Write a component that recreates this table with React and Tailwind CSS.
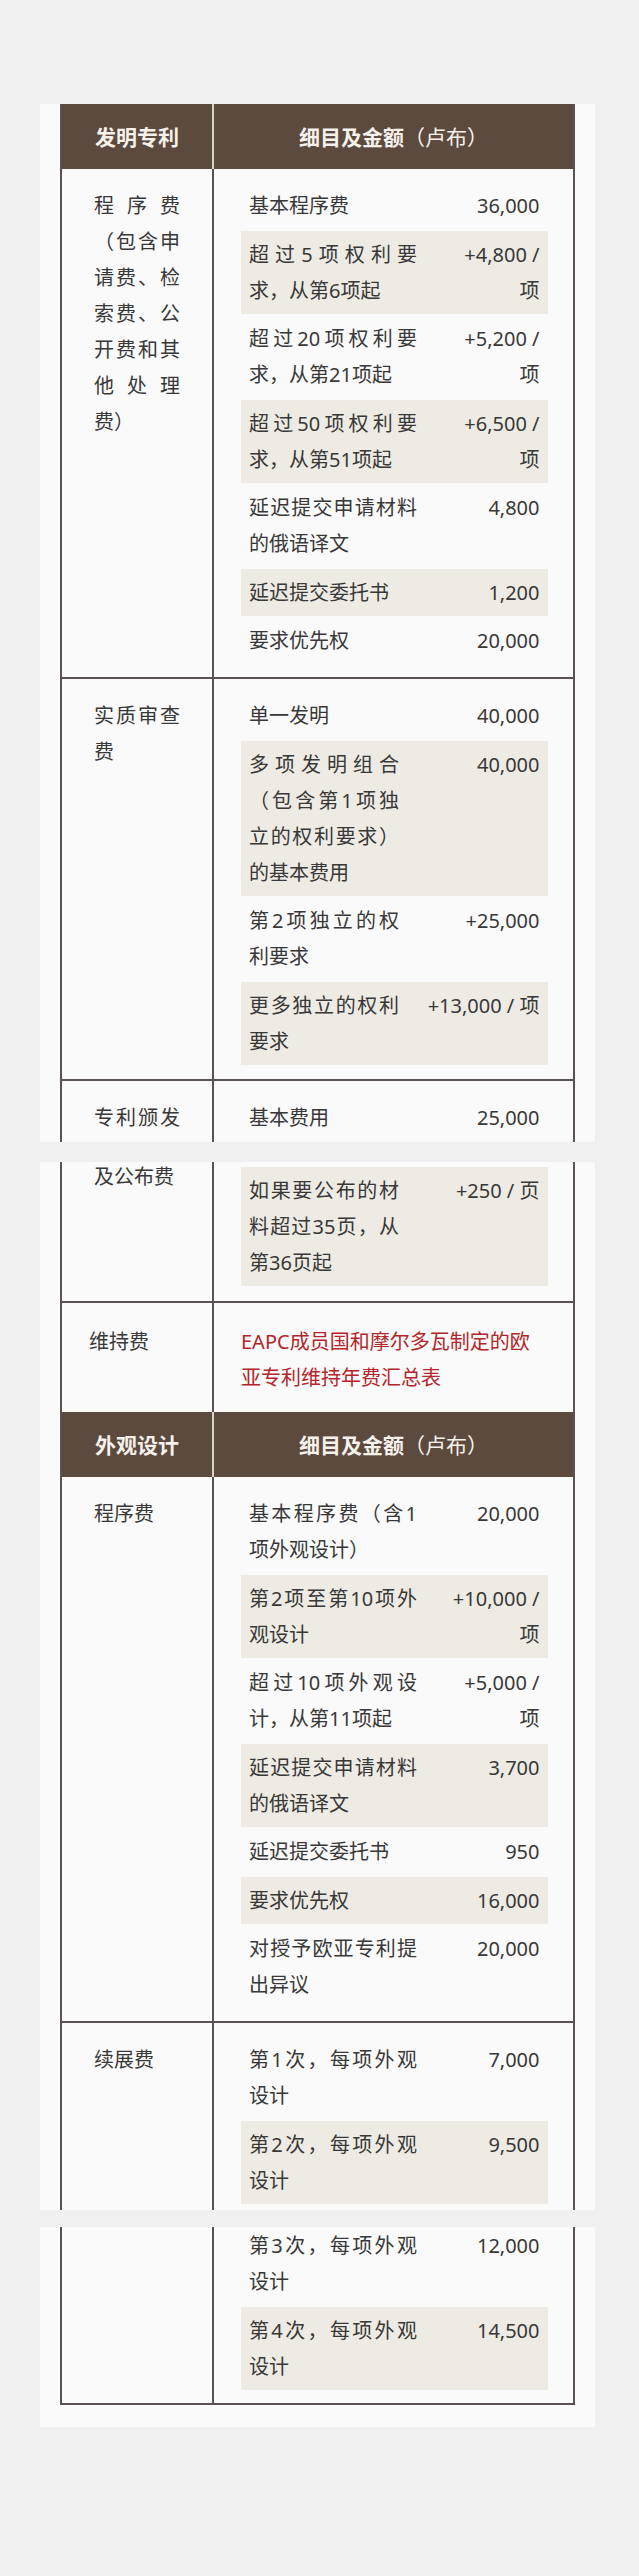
import React from 'react';

const inventionProcedure = [
    {label: '基本程序费', value: '36,000'},
    {label: '超过5项权利要求，从第6项起', value: '+4,800 / 项', shaded: true},
    {label: '超过20项权利要求，从第21项起', value: '+5,200 / 项'},
    {label: '超过50项权利要求，从第51项起', value: '+6,500 / 项', shaded: true},
    {label: '延迟提交申请材料的俄语译文', value: '4,800'},
    {label: '延迟提交委托书', value: '1,200', shaded: true},
    {label: '要求优先权', value: '20,000'},
];

const examination = [
    {label: '单一发明', value: '40,000'},
    {label: '多项发明组合（包含第1项独立的权利要求）的基本费用', value: '40,000', shaded: true},
    {label: '第2项独立的权利要求', value: '+25,000'},
    {label: '更多独立的权利要求', value: '+13,000 / 项', shaded: true},
];

const designProcedure = [
    {label: '基本程序费（含1项外观设计）', value: '20,000'},
    {label: '第2项至第10项外观设计', value: '+10,000 / 项', shaded: true},
    {label: '超过10项外观设计，从第11项起', value: '+5,000 / 项'},
    {label: '延迟提交申请材料的俄语译文', value: '3,700', shaded: true},
    {label: '延迟提交委托书', value: '950'},
    {label: '要求优先权', value: '16,000', shaded: true},
    {label: '对授予欧亚专利提出异议', value: '20,000'},
];

const Item = ({label, value, shaded, wide, pad = 'py-[5.5px]'}) => (
    <div className={`flex items-start px-[8.5px] ${pad} ${shaded ? 'bg-[#eeebe4]' : ''}`}>
        <div className={`${wide ? 'w-[168px]' : 'w-[150px]'} shrink-0 text-justify`}>{label}</div>
        <div className={`${wide ? 'w-[96px]' : 'w-[120px]'} ml-auto text-right`}>{value}</div>
    </div>
);

const Items = ({children}) => <div className="flex flex-col gap-[1.5px]">{children}</div>;

const Segment = ({children, last}) => (
    <div className={`ml-[40px] w-[555px] bg-[#fafafa] px-[20px] ${last ? 'pb-[22px]' : ''}`}>
        <div className="border-x-2 border-[#5a5252]">{children}</div>
    </div>
);

const Header = ({title}) => (
    <div className="flex h-[65px] bg-[#5c4a3f] text-[21px] font-bold text-[#f6f1ea]">
        <div className="w-[152px] shrink-0 border-r-2 border-[#d8d2cc] flex items-center justify-center">{title}</div>
        <div className="flex-1 flex items-center justify-center">
            细目及金额<span className="font-normal">（卢布）</span>
        </div>
    </div>
);

const LeftText = ({children, className = 'pt-[19px]'}) => (
    <div className="w-[152px] shrink-0 border-r-2 border-[#5a5252]">
        <div className={`w-[86px] mx-auto text-justify ${className}`}>{children}</div>
    </div>
);

export default function App() {
    return (
        <div className="w-[639px] min-h-[2576px] bg-[#f0f0f0] pt-[104px] font-['Noto_Sans','Noto_Sans_CJK_SC',sans-serif] text-[20px] leading-[36px] text-[#383838]">
            <Segment>
                <Header title="发明专利"/>
                <div className="flex border-b-2 border-[#5a5252]">
                    <LeftText>程序费（包含申请费、检索费、公开费和其他处理费）</LeftText>
                    <div className="flex-1 pl-[26.5px] pr-[25px] pt-[13.5px] pb-[12.5px]">
                        <Items>
                            {inventionProcedure.map((it, i) => <Item key={i} {...it} wide/>)}
                        </Items>
                    </div>
                </div>
                <div className="flex border-b-2 border-[#5a5252]">
                    <LeftText>实质审查费</LeftText>
                    <div className="flex-1 pl-[26.5px] pr-[25px] pt-[13.5px] pb-[14px]">
                        <Items>
                            {examination.map((it, i) => <Item key={i} {...it}/>)}
                        </Items>
                    </div>
                </div>
                <div className="flex h-[61px]">
                    <LeftText className="pt-[19px] [text-align-last:justify]">专利颁发</LeftText>
                    <div className="flex-1 pl-[26.5px] pr-[25px] pt-[13.5px]">
                        <Item label="基本费用" value="25,000" pad="pt-[5.5px]"/>
                    </div>
                </div>
            </Segment>

            <div className="h-[20px]"/>

            <Segment>
                <div className="flex border-b-2 border-[#5a5252]">
                    <LeftText className="-mt-[3.5px]">及公布费</LeftText>
                    <div className="flex-1 pl-[26.5px] pr-[25px] pt-[5px] pb-[15px]">
                        <Item label="如果要公布的材料超过35页，从第36页起" value="+250 / 页" shaded/>
                    </div>
                </div>
                <div className="flex">
                    <div className="w-[152px] shrink-0 border-r-2 border-[#5a5252] pl-[27px] pt-[20.5px]">维持费</div>
                    <div className="flex-1 pl-[27px] pr-[26px] pt-[20.5px] pb-[16.5px] text-[#b3262b]">
                        EAPC成员国和摩尔多瓦制定的欧亚专利维持年费汇总表
                    </div>
                </div>
                <Header title="外观设计"/>
                <div className="flex border-b-2 border-[#5a5252]">
                    <LeftText>程序费</LeftText>
                    <div className="flex-1 pl-[26.5px] pr-[25px] pt-[13.5px] pb-[12.5px]">
                        <Items>
                            {designProcedure.map((it, i) => <Item key={i} {...it} wide/>)}
                        </Items>
                    </div>
                </div>
                <div className="flex">
                    <LeftText>续展费</LeftText>
                    <div className="flex-1 pl-[26.5px] pr-[25px] pt-[13.5px] pb-[5.5px]">
                        <Items>
                            <Item label="第1次，每项外观设计" value="7,000" wide/>
                            <Item label="第2次，每项外观设计" value="9,500" shaded wide/>
                        </Items>
                    </div>
                </div>
            </Segment>

            <div className="h-[17px]"/>

            <Segment last>
                <div className="flex border-b-2 border-[#5a5252]">
                    <LeftText> </LeftText>
                    <div className="flex-1 pl-[26.5px] pr-[25px] pb-[12.5px]">
                        <Items>
                            <Item label="第3次，每项外观设计" value="12,000" wide pad="pt-[1.5px] pb-[5.5px]"/>
                            <Item label="第4次，每项外观设计" value="14,500" shaded wide/>
                        </Items>
                    </div>
                </div>
            </Segment>
        </div>
    );
}
